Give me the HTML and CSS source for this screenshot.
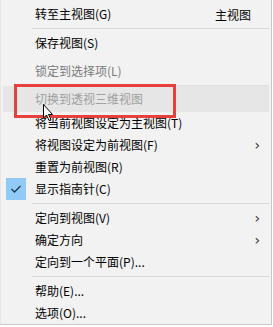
FILE: index.html
```html
<!DOCTYPE html>
<html>
<head>
<meta charset="utf-8">
<link rel="stylesheet" href="styles.css">
</head>
<body>
<div class="menu">
  <div class="row first"><span class="label">转至主视图(G)</span><span class="key">主视图</span></div>
  <div class="sep"></div>
  <div class="row"><span class="label">保存视图(S)</span></div>
  <div class="gap"></div>
  <div class="row disabled"><span class="label">锁定到选择项(L)</span></div>
  <div class="sep thin"></div>
  <div class="row hover disabled"><span class="label">切换到透视三维视图</span></div>
  <div class="row"><span class="label">将当前视图设定为主视图(T)</span></div>
  <div class="row"><span class="label">将视图设定为前视图(F)</span><span class="arrow">›</span></div>
  <div class="row"><span class="label">重置为前视图(R)</span></div>
  <div class="row"><span class="check"><svg width="12" height="10" viewBox="0 0 12 10"><path d="M1.5 5 L4.5 8 L10.5 2" fill="none" stroke="#1f3b57" stroke-width="1.4"/></svg></span><span class="label">显示指南针(C)</span></div>
  <div class="sep"></div>
  <div class="row"><span class="label">定向到视图(V)</span><span class="arrow">›</span></div>
  <div class="row"><span class="label">确定方向</span><span class="arrow">›</span></div>
  <div class="row"><span class="label">定向到一个平面(P)...</span></div>
  <div class="sep"></div>
  <div class="row"><span class="label">帮助(E)...</span></div>
  <div class="row"><span class="label">选项(O)...</span></div>

  <div class="redbox"></div>
  <svg class="cursor" width="12" height="18" viewBox="0 0 12 18"><path d="M0.5 0.5 L0.5 14 L3.5 11 L6 16.5 L8 15.5 L5.5 10.5 L9.5 10.5 Z" fill="#ffffff" stroke="#000000" stroke-width="1"/></svg>
</div>
</body>
</html>
```
FILE: styles.css
```css
html, body {
  margin: 0;
  padding: 0;
  background: #ffffff;
}
.menu {
  position: relative;
  box-sizing: border-box;
  width: 272px;
  height: 325px;
  background: #f2f2f2;
  border-right: 1px solid #c8c8c8;
  border-bottom: 1px solid #c8c8c8;
  border-left: 1px solid #e6e6e6;
  padding: 3px 2px 0 2px;
  font-family: "Noto Sans CJK SC", "Microsoft YaHei", sans-serif;
  font-size: 12px;
  color: #000000;
}
.row {
  position: relative;
  display: flex;
  align-items: center;
  height: 22px;
  padding-left: 32px;
  padding-right: 14px;
}
.row.hover {
  height: 26px;
  background: #e6e6e6;
}
.label {
  flex: 1;
  white-space: nowrap;
  line-height: 22px;
}
.disabled .label {
  color: #7a7a7a;
}
.hover .label {
  color: #a0a0a0;
}
.key {
  margin-right: 4px;
}
.arrow {
  font-family: "DejaVu Sans", sans-serif;
  font-size: 14px;
  color: #333333;
  margin-right: -5px;
}
.check {
  position: absolute;
  left: 3px;
  top: 0;
  width: 20px;
  height: 22px;
  background: #91c9f7;
  display: flex;
  align-items: center;
  justify-content: center;
}
.sep {
  height: 7px;
  display: flex;
  align-items: center;
  padding-left: 29px;
}
.sep::after {
  content: "";
  flex: 1;
  height: 1px;
  background: #d7d7d7;
}
.sep.thin {
  height: 4px;
  align-items: flex-end;
}
.sep.thin::after {
  background: #e0e0e0;
}
.gap {
  height: 6px;
}
.redbox {
  position: absolute;
  left: 13px;
  top: 84px;
  width: 156px;
  height: 28px;
  border: 3px solid #e8403c;
}
.cursor {
  position: absolute;
  left: 42px;
  top: 104px;
}
```
